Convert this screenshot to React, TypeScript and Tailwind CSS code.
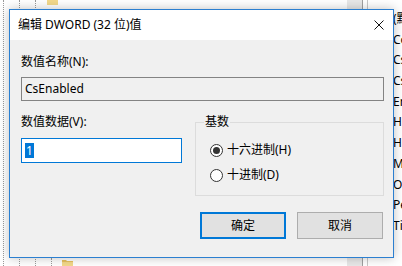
import React from 'react';

const rows = [
  '(默认)',
  'CoalescingTimerInterval',
  'CsDeviceComplianceTimeout',
  'CsEnabled',
  'EnergyEstimationEnabled',
  'HiberFileSizePercent',
  'HibernateEnabled',
  'MfBufferingThreshold',
  'OtherPowerSettings',
  'PerfCalculateActualUtilization',
  'TimerRebaseThresholdOnDripsExit',
];

function Folder() {
  return (
    <svg width="11" height="9" viewBox="0 0 11 9">
      <path d="M0 1h4l1 1h6v7H0z" fill="#e8c260" />
      <path d="M0 3h11v6H0z" fill="#f3d98b" />
    </svg>
  );
}

function Radio({ checked, label }: { checked?: boolean; label: string }) {
  return (
    <label className="flex items-center gap-[4px] leading-[16px]">
      <span className="flex h-[13px] w-[13px] items-center justify-center rounded-full border border-[#333333] bg-white">
        {checked && <span className="h-[7px] w-[7px] rounded-full bg-[#333333]" />}
      </span>
      <span>{label}</span>
    </label>
  );
}

export default function App() {
  return (
    <div className="relative h-[266px] w-[402px] overflow-hidden bg-white text-[12px] text-black font-['Noto_Sans','Noto_Sans_CJK_SC',sans-serif]">
      {/* registry editor behind the dialog */}
      <div className="flex h-full">
        <div className="flex h-full w-[347px] shrink-0">
          <div className="ml-[3px] h-full border-l border-dotted border-[#9a9a9a]" />
          <div className="ml-[15px] h-full border-l border-dotted border-[#9a9a9a]" />
          <div className="ml-[15px] h-full border-l border-dotted border-[#9a9a9a]" />
          <div className="flex flex-1 flex-col justify-between">
            <div className="-mt-[4px] ml-[11px] flex items-start gap-[6px]">
              <Folder />
              <span className="-mt-[11px] leading-[16px] text-[#222]">NetworkSettings</span>
            </div>
            <div className="mb-[-2px] flex items-end">
              <div className="ml-[15px] h-[10px] border-l border-dotted border-[#9a9a9a]" />
              <div className="ml-[10px]">
                <Folder />
              </div>
            </div>
          </div>
        </div>
        <div className="h-full w-[16px] shrink-0 border-r border-[#a0a0a0] bg-[#e8e8e8]" />
        <div className="h-full w-[5px] shrink-0 border-r border-[#c8c8c8] bg-white" />
        <div className="min-w-0 flex-1 overflow-hidden whitespace-nowrap pl-[25px] pt-[9px]">
          {rows.map((r) => (
            <div key={r} className="h-[20.7px] leading-[20.7px]">
              {r}
            </div>
          ))}
        </div>
      </div>

      {/* dialog */}
      <div className="absolute left-[9px] top-[9px] flex h-[249px] w-[385px] flex-col border border-[#2b7fd0] bg-[#f0f0f0] shadow-[0_0_10px_rgba(0,0,0,0.25)]">
        <div className="flex h-[30px] items-center justify-between bg-white pl-[8px] pr-[9px]">
          <span className="leading-[16px]">编辑 DWORD (32 位)值</span>
          <svg width="10" height="10" viewBox="0 0 10 10">
            <path d="M0.5 0.5l9 9M9.5 0.5l-9 9" stroke="#111" strokeWidth="1" />
          </svg>
        </div>

        <div className="flex flex-col pl-[11px] pr-[9px]">
          <div className="mt-[14px] leading-[16px]">数值名称(N):</div>
          <div className="mt-[7px] flex h-[24px] items-center border border-[#838383] bg-[#f0f0f0] pl-[3px] leading-[16px]">
            CsEnabled
          </div>

          <div className="mt-[13px] flex">
            <div className="flex w-[161px] flex-col">
              <div className="leading-[16px]">数值数据(V):</div>
              <div className="mt-[8px] flex h-[25px] items-center border border-[#0078d7] bg-white pl-[3px]">
                <span className="bg-[#0078d7] px-[1px] leading-[15px] text-white">1</span>
              </div>
            </div>
            <fieldset className="ml-[13px] h-[82px] flex-1 border border-[#dcdcdc] pl-[14px] pt-[12px]">
              <legend className="ml-[-6px] px-[1px] leading-[16px]">基数</legend>
              <div className="flex flex-col gap-[9px]">
                <Radio checked label="十六进制(H)" />
                <Radio label="十进制(D)" />
              </div>
            </fieldset>
          </div>

          <div className="mt-[16px] flex justify-end gap-[11px] pr-[1px]">
            <button className="flex h-[27px] w-[86px] items-center justify-center border-2 border-[#0078d7] bg-[#e1e1e1] leading-[16px]">
              确定
            </button>
            <button className="flex h-[27px] w-[86px] items-center justify-center border border-[#adadad] bg-[#e1e1e1] leading-[16px]">
              取消
            </button>
          </div>
        </div>
      </div>
    </div>
  );
}
